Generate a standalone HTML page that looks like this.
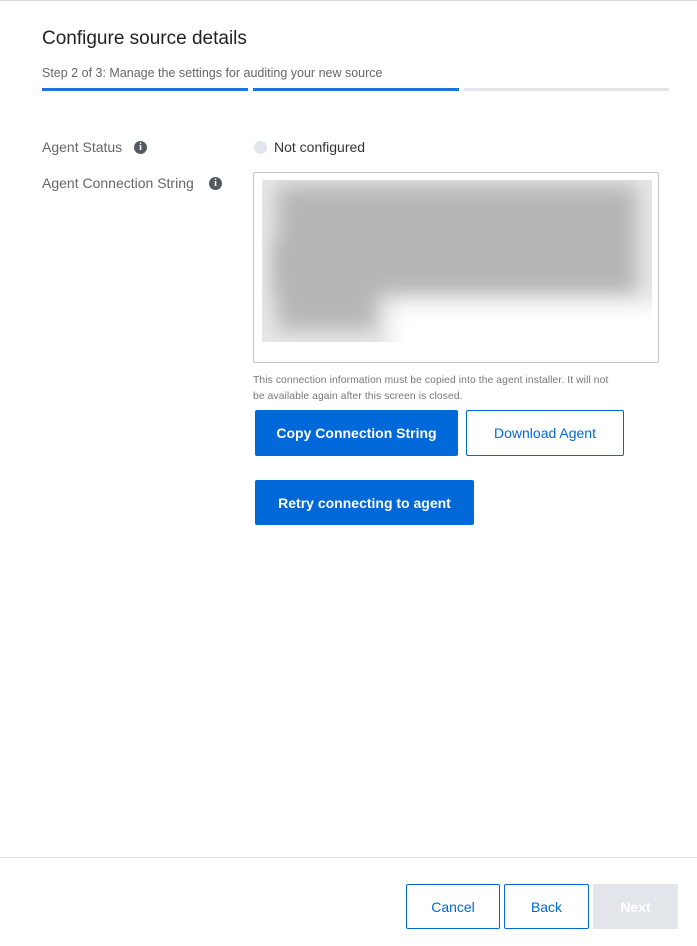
<!DOCTYPE html>
<html><head><style>
body{margin:0;width:697px;height:946px;background:#fff;font-family:"Liberation Sans",sans-serif;position:relative;overflow:hidden}
.a{position:absolute}
.btn{position:absolute;box-sizing:border-box;border-radius:2px;font-weight:bold;font-size:14px;display:flex;align-items:center;justify-content:center}
.pri{background:#0068d9;color:#fff}
.sec{border:1px solid #0068d9;color:#0068d9;background:#fff;font-weight:normal}
.info{width:13px;height:13px;border-radius:50%;background:#555a60;color:#fff;font-size:10px;font-weight:bold;text-align:center;line-height:13px;font-family:"Liberation Serif",serif}
</style></head><body>
<div class="a" style="left:0;top:0;width:697px;height:1px;background:#ddd"></div>
<div class="a" style="left:42px;top:28px;font-size:19px;color:#222">Configure source details</div>
<div class="a" style="left:42px;top:66px;font-size:12.5px;color:#666">Step 2 of 3: Manage the settings for auditing your new source</div>
<div class="a" style="left:42px;top:88px;width:206px;height:3px;background:#1a73e0"></div>
<div class="a" style="left:253px;top:88px;width:206px;height:3px;background:#1a73e0"></div>
<div class="a" style="left:464px;top:88px;width:205px;height:3px;background:#e2e5ea"></div>
<div class="a" style="left:42px;top:139px;font-size:14px;color:#666">Agent Status</div>
<div class="a info" style="left:134px;top:141px">i</div>
<div class="a" style="left:254px;top:141px;width:13px;height:13px;border-radius:50%;background:#e2e6ec"></div>
<div class="a" style="left:274px;top:139px;font-size:14px;color:#333">Not configured</div>
<div class="a" style="left:42px;top:175px;font-size:14px;color:#666">Agent Connection String</div>
<div class="a info" style="left:209px;top:177px">i</div>
<div class="a" style="left:253px;top:172px;width:404px;height:189px;border:1px solid #c2c4c8;border-radius:2px"></div>
<div class="a" style="left:262px;top:180px;width:390px;height:162px;overflow:hidden;background:#e8e8e8">
 <div class="a" style="left:15px;top:5px;width:360px;height:110px;background:#b6b6b6;filter:blur(10px)"></div>
 <div class="a" style="left:15px;top:60px;width:100px;height:90px;background:#b6b6b6;filter:blur(10px)"></div>
 <div class="a" style="left:130px;top:125px;width:280px;height:60px;background:#fff;filter:blur(10px)"></div>
</div>
<div class="a" style="left:253px;top:373px;width:420px;font-size:10.3px;line-height:16px;color:#777;letter-spacing:0.1px">This connection information must be copied into the agent installer. It will not<br>be available again after this screen is closed.</div>
<div class="btn pri" style="left:255px;top:410px;width:203px;height:46px">Copy Connection String</div>
<div class="btn sec" style="left:466px;top:410px;width:158px;height:46px">Download Agent</div>
<div class="btn pri" style="left:255px;top:480px;width:219px;height:45px">Retry connecting to agent</div>
<div class="a" style="left:0;top:857px;width:697px;height:1px;background:#dcdfe3"></div>
<div class="btn sec" style="left:406px;top:884px;width:94px;height:45px">Cancel</div>
<div class="btn sec" style="left:504px;top:884px;width:85px;height:45px">Back</div>
<div class="btn" style="left:593px;top:884px;width:85px;height:45px;background:#e2e5ea;color:#fff">Next</div>
</body></html>
